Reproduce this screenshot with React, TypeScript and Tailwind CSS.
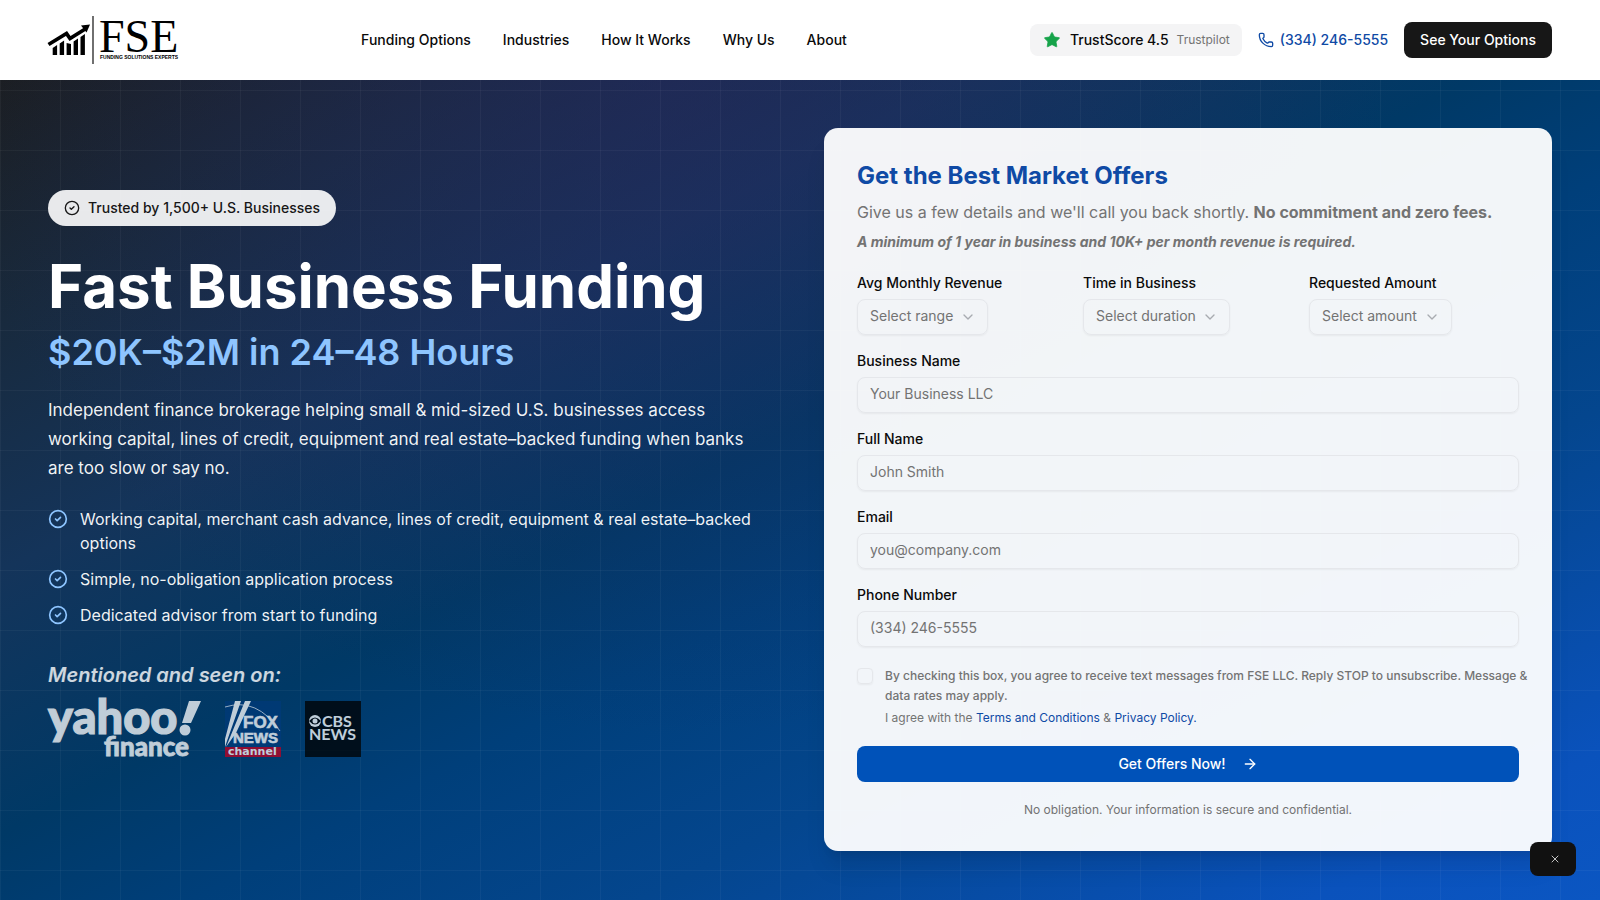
import { ArrowRight, ChevronDown, CircleCheck, Phone, Star, X } from 'lucide-react';

const navLinks = ['Funding Options', 'Industries', 'How It Works', 'Why Us', 'About'];

const benefits = [
    'Working capital, merchant cash advance, lines of credit, equipment & real estate–backed options',
    'Simple, no-obligation application process',
    'Dedicated advisor from start to funding',
];

const selects = [
    { id: 'revenue', label: 'Avg Monthly Revenue', placeholder: 'Select range', width: 'w-[131px]' },
    { id: 'duration', label: 'Time in Business', placeholder: 'Select duration', width: 'w-[147px]' },
    { id: 'amount', label: 'Requested Amount', placeholder: 'Select amount', width: 'w-[143px]' },
];

const fields = [
    { id: 'business', label: 'Business Name', type: 'text', placeholder: 'Your Business LLC' },
    { id: 'name', label: 'Full Name', type: 'text', placeholder: 'John Smith' },
    { id: 'email', label: 'Email', type: 'email', placeholder: 'you@company.com' },
    { id: 'phone', label: 'Phone Number', type: 'tel', placeholder: '(334) 246-5555' },
];

function Logo() {
    return (
        <svg viewBox="0 0 130 48" className="h-12 w-[130px] overflow-visible" role="img" aria-label="FSE Funding Solutions Experts">
            <path d="M0.500 28.500 L18.500 17.500 L22 22.500 L38 12.500" fill="none" stroke="#000" strokeWidth="3.800" />
            <path d="M33 9.500 L42 8.500 L38.500 16.500 Z" />
            <path d="M4.700 32l4.400-3v10H4.700zM11.700 27.500l4.400-3V39h-4.400zM18.600 27l4.400 1v11h-4.400zM25.600 25.500l4.400-3V39h-4.400zM32.500 21l4.400-3V39h-4.400z" />
            <path d="M45 0v48" stroke="#222" strokeWidth="1.300" />
            <text x="51" y="36" fontSize="46" fontFamily="Liberation Serif, serif">FSE</text>
            <text x="52" y="43" fontSize="5" fontWeight="700" fontFamily="Liberation Sans, sans-serif">FUNDING SOLUTIONS EXPERTS</text>
        </svg>
    );
}

function Header() {
    return (
        <header className="flex h-20 items-center justify-between bg-white px-12">
            <a href="#"><Logo /></a>
            <nav className="flex items-center gap-8 text-sm font-medium">
                {navLinks.map((link) => (
                    <a key={link} href="#">{link}</a>
                ))}
            </nav>
            <div className="flex items-center gap-4 text-sm font-medium">
                <div className="flex h-8 items-center gap-2 rounded-lg bg-[#f4f4f5] px-3">
                    <Star className="size-5 fill-[#16a34a] p-px text-[#16a34a]" strokeWidth={1} />
                    <span>TrustScore 4.5</span>
                    <span className="text-xs font-normal text-[#737373]">Trustpilot</span>
                </div>
                <a href="tel:3342465555" className="flex items-center gap-1.5 text-[#0f4aa5]">
                    <Phone className="size-4" />
                    (334) 246-5555
                </a>
                <button className="h-9 rounded-lg bg-[#171717] px-4 text-white">See Your Options</button>
            </div>
        </header>
    );
}

function PressLogos() {
    return (
        <div className="flex items-center gap-6 opacity-75">
            <svg viewBox="0 0 153 56" className="h-14 w-[153px] overflow-visible" fill="#fff" role="img" aria-label="yahoo! finance">
                <g fontWeight="900" fontFamily="Lato, sans-serif" stroke="#fff">
                    <text x="0" y="33" fontSize="47" strokeWidth="1.200">yahoo</text>
                    <text x="56" y="55" fontSize="26" strokeWidth="0.800">finance</text>
                </g>
                <path d="M141 0h12l-10 22h-9z" />
                <circle cx="137" cy="29" r="5.500" />
            </svg>
            <svg viewBox="0 0 56 56" className="size-14" role="img" aria-label="Fox News channel">
                <path d="M0 0h56v46H0z" fill="#003b85" opacity="0.600" />
                <path d="M0 46h56v10H0z" fill="#c00020" />
                <path d="M10 0h6L2 40l-2 6v-8zM20 0h6L11 32 1 46z" fill="#fff" />
                <path d="M0 6Q32-4 55 30" fill="none" stroke="#fff" strokeWidth="0.800" />
                <g fill="#fff" stroke="#fff" strokeWidth="0.600" fontFamily="Liberation Sans, sans-serif" fontWeight="700">
                    <text x="18" y="27" fontSize="17">FOX</text>
                    <text x="8" y="42" fontSize="15">NEWS</text>
                </g>
                <text x="3" y="54" fontSize="11" fontWeight="700" fill="#fff" fontFamily="DejaVu Sans, sans-serif">channel</text>
            </svg>
            <svg viewBox="0 0 56 56" className="size-14" role="img" aria-label="CBS News">
                <path d="M0 0h56v56H0z" fill="#000" />
                <circle cx="10" cy="20" r="6" fill="#fff" />
                <path d="M4 20q6-7 12 0q-6 7-12 0z" fill="#000" />
                <circle cx="10" cy="20" r="2.500" fill="#fff" />
                <g fill="#fff" fontFamily="Lato, sans-serif" fontWeight="700">
                    <text x="17" y="26" fontSize="16">CBS</text>
                    <text x="4" y="39" fontSize="16">NEWS</text>
                </g>
            </svg>
        </div>
    );
}

function Intro() {
    return (
        <div className="flex flex-col items-start pb-8 text-white">
            <div className="flex h-9 items-center gap-2 rounded-full bg-white/90 px-4 text-sm font-medium text-[#171717]">
                <CircleCheck className="size-4" />
                Trusted by 1,500+ U.S. Businesses
            </div>
            <h1 className="mt-[30px] text-6xl leading-[60px] font-bold">Fast Business Funding</h1>
            <p className="mt-3 text-4xl leading-[48px] font-semibold text-[#8ec5ff]">$20K–$2M in 24–48 Hours</p>
            <p className="mt-5 pr-4 text-[17px] leading-[29px] text-white/95">
                Independent finance brokerage helping small &amp; mid-sized U.S. businesses access working capital, lines of credit, equipment and real estate–backed funding when banks are too slow or say no.
            </p>
            <ul className="mt-6 flex flex-col gap-3">
                {benefits.map((benefit) => (
                    <li key={benefit} className="flex items-start gap-3 text-white/95">
                        <CircleCheck className="mt-0.5 size-5 shrink-0 text-[#8ec5ff]" />
                        {benefit}
                    </li>
                ))}
            </ul>
            <p className="mt-[34px] mb-3 text-xl leading-7 font-semibold text-white/80 italic">Mentioned and seen on:</p>
            <PressLogos />
        </div>
    );
}

function OfferForm() {
    return (
        <form className="rounded-[14px] bg-white/95 px-[33px] py-8 text-sm text-[#0a0a0a] shadow-xl">
            <h2 className="text-2xl leading-8 font-bold text-[#0f4aa5]">Get the Best Market Offers</h2>
            <p className="mt-2 text-base text-[#737373]">
                Give us a few details and we'll call you back shortly. <strong className="font-bold">No commitment and zero fees.</strong>
            </p>
            <p className="mt-2 font-bold text-[#737373] italic">A minimum of 1 year in business and 10K+ per month revenue is required.</p>

            <div className="mt-[23px] grid grid-cols-3 gap-4">
                {selects.map((select) => (
                    <div key={select.id} className="flex flex-col items-start gap-2">
                        <label htmlFor={select.id} className="leading-4 font-medium">{select.label}</label>
                        <div className="relative">
                            <select id={select.id} className={`h-9 appearance-none rounded-lg border border-[#e5e7eb] px-3 pb-0.5 text-[#737373] shadow-xs ${select.width}`}>
                                <option>{select.placeholder}</option>
                            </select>
                            <ChevronDown className="pointer-events-none absolute top-2.5 right-3 size-4 text-[#a8abb0]" />
                        </div>
                    </div>
                ))}
            </div>

            {fields.map((field) => (
                <div key={field.id} className="mt-[18px] flex flex-col gap-2">
                    <label htmlFor={field.id} className="leading-4 font-medium">{field.label}</label>
                    <input id={field.id} type={field.type} placeholder={field.placeholder} className="h-9 rounded-lg border border-[#e5e7eb] px-3 pb-1 shadow-xs placeholder:text-[#737373]" />
                </div>
            ))}

            <div className="mt-[19px] -mr-4 flex items-start gap-3 text-xs leading-5 text-[#737373]">
                <input id="consent" type="checkbox" className="mt-0.5 size-4 shrink-0 appearance-none rounded border border-[#e5e7eb] shadow-xs" />
                <div>
                    <label htmlFor="consent" className="block font-medium">
                        By checking this box, you agree to receive text messages from FSE LLC. Reply STOP to unsubscribe. Message &amp; data rates may apply.
                    </label>
                    <p className="mt-0.5">
                        I agree with the <a href="#" className="text-[#0f4aa5]">Terms and Conditions</a> &amp; <a href="#" className="text-[#0f4aa5]">Privacy Policy.</a>
                    </p>
                </div>
            </div>

            <button type="button" className="mt-[18px] flex h-9 w-full items-center justify-center gap-4 rounded-lg bg-[#0052b9] font-medium text-white">
                Get Offers Now!
                <ArrowRight className="size-4" />
            </button>
            <p className="mt-5 mb-px text-center text-xs leading-4 text-[#737373]">No obligation. Your information is secure and confidential.</p>
        </form>
    );
}

export default function App() {
    return (
        <div className="flex min-h-screen flex-col font-[Inter,sans-serif] text-[#0a0a0a]">
            <Header />
            <main className="relative flex-1 bg-[radial-gradient(ellipse_45%_80%_at_42%_0%,rgba(40,38,98,0.5),transparent),linear-gradient(to_bottom_right,#1b1e21_0%,#182a3e_15%,#14345a_30%,#003966_46%,#003f7a_56%,#04468e_70%,#0a52bc_91%,#0b56c2_100%)]">
                <div className="absolute inset-0 bg-[linear-gradient(to_right,rgba(255,255,255,0.04)_1px,transparent_1px),linear-gradient(to_bottom,rgba(255,255,255,0.04)_1px,transparent_1px)] bg-[size:60px_60px] bg-[position:0_10px]" />
                <div className="relative grid grid-cols-2 items-center gap-12 px-12 py-12">
                    <Intro />
                    <OfferForm />
                </div>
            </main>
            <button aria-label="Close" className="fixed right-6 bottom-6 flex h-[34px] w-[46px] items-center justify-center rounded-lg bg-[#111111] pl-1 text-white">
                <X className="size-3" strokeWidth={1.5} />
            </button>
        </div>
    );
}
